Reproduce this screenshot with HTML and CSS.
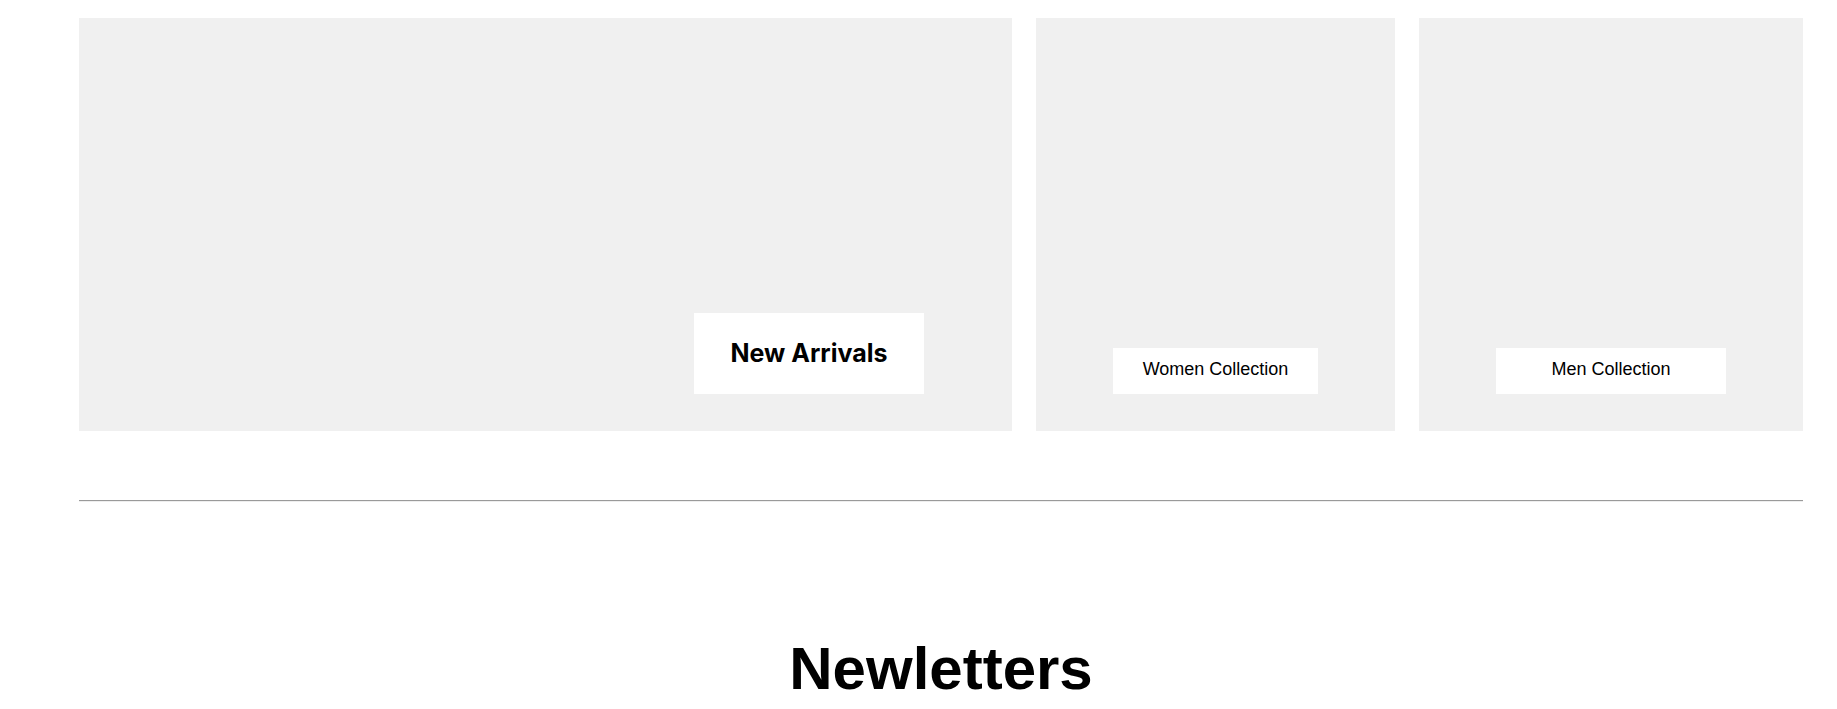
FILE: index.html
```html
<!DOCTYPE html>
<html lang="en">
<head>
<meta charset="utf-8">
<title>Collections</title>
<link rel="stylesheet" href="styles.css">
</head>
<body>
<main class="page">
  <section class="collections">
    <div class="card card--wide">
      <a class="label label--featured" href="#">New Arrivals</a>
    </div>
    <div class="card card--women">
      <a class="label label--women" href="#">Women Collection</a>
    </div>
    <div class="card card--men">
      <a class="label label--men" href="#">Men Collection</a>
    </div>
  </section>
  <hr class="divider">
  <section class="newsletter">
    <h2 class="newsletter__title">Newletters</h2>
  </section>
</main>
</body>
</html>
```
FILE: styles.css
```css
html, body {
  margin: 0;
  padding: 0;
  background: #ffffff;
  overflow: hidden;
}

.page {
  width: 1724px;
  margin-left: 79px;
  padding-top: 18px;
  font-family: "Liberation Sans", Arial, sans-serif;
  color: #000;
}

.collections {
  display: grid;
  grid-template-columns: 933px 359px 384px;
  column-gap: 24px;
  height: 413px;
}

.card {
  background: #f0f0f0;
  display: flex;
  align-items: flex-end;
  justify-content: center;
  padding-bottom: 37px;
  box-sizing: border-box;
}

.card--wide {
  justify-content: flex-end;
  padding-right: 88px;
}

.label {
  display: flex;
  align-items: center;
  justify-content: center;
  background: #ffffff;
  color: #000;
  text-decoration: none;
  box-sizing: border-box;
}

.label--featured {
  width: 230px;
  height: 81px;
  padding-bottom: 2px;
  font-family: Inter, "Liberation Sans", sans-serif;
  font-weight: 700;
  font-size: 25px;
}

.label--women {
  width: 205px;
  height: 46px;
  padding-bottom: 3px;
  font-size: 18px;
}

.label--men {
  width: 230px;
  height: 46px;
  padding-bottom: 3px;
  font-size: 18px;
}

.divider {
  margin: 69px 0 0 0;
  border: 0;
  border-top: 1px solid #9a9a9a;
  border-bottom: 1px solid #eeeeee;
  height: 0;
}

.newsletter {
  text-align: center;
}

.newsletter__title {
  margin: 132px 0 0 0;
  font-size: 60px;
  font-weight: 700;
  line-height: 1.15;
}
```
